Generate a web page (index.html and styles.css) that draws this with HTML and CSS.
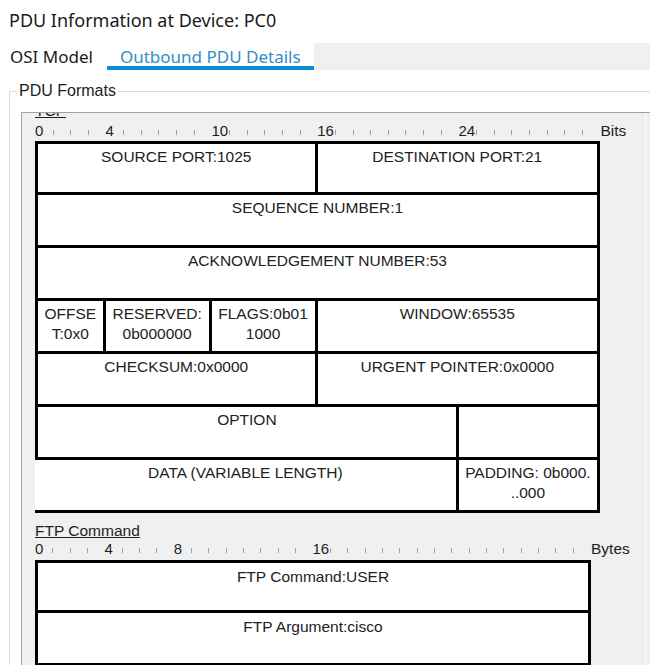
FILE: index.html
```html
<!DOCTYPE html>
<html>
<head>
<meta charset="utf-8">
<title>PDU Information</title>
<link rel="stylesheet" href="styles.css">
</head>
<body>
<div class="title">PDU Information at Device: PC0</div>
<div class="tabs">
  <div class="tab">OSI Model</div>
  <div class="tab tab-active">Outbound PDU Details</div>
  <div class="tab-fill"></div>
</div>
<fieldset class="formats">
  <legend>PDU Formats</legend>
  <div class="pane">
    <div class="viewport">
      <div class="scroll">
        <div class="sec-label">TCP</div>
        <div class="ruler bits">
          <span class="u">0</span><span class="u"><i class="tk"></i></span><span class="u"><i class="tk"></i></span><span class="u"><i class="tk"></i></span><span class="u">4</span><span class="u"><i class="tk"></i></span><span class="u"><i class="tk"></i></span><span class="u"><i class="tk"></i></span><span class="u"><i class="tk"></i></span><span class="u"><i class="tk"></i></span><span class="u">10</span><span class="u"><i class="tk"></i></span><span class="u"><i class="tk"></i></span><span class="u"><i class="tk"></i></span><span class="u"><i class="tk"></i></span><span class="u"><i class="tk"></i></span><span class="u">16</span><span class="u"><i class="tk"></i></span><span class="u"><i class="tk"></i></span><span class="u"><i class="tk"></i></span><span class="u"><i class="tk"></i></span><span class="u"><i class="tk"></i></span><span class="u"><i class="tk"></i></span><span class="u"><i class="tk"></i></span><span class="u">24</span><span class="u"><i class="tk"></i></span><span class="u"><i class="tk"></i></span><span class="u"><i class="tk"></i></span><span class="u"><i class="tk"></i></span><span class="u"><i class="tk"></i></span><span class="u"><i class="tk"></i></span><span class="u"><i class="tk"></i></span><span class="unit-name">Bits</span>
        </div>
        <div class="pdu pdu-tcp">
          <div class="cell edge top s16">SOURCE PORT:1025</div>
          <div class="cell top s16">DESTINATION PORT:21</div>
          <div class="cell edge s32">SEQUENCE NUMBER:1</div>
          <div class="cell edge s32">ACKNOWLEDGEMENT NUMBER:53</div>
          <div class="cell edge s4">OFFSE<br>T:0x0</div>
          <div class="cell s6">RESERVED:<br>0b000000</div>
          <div class="cell s6">FLAGS:0b01<br>1000</div>
          <div class="cell s16">WINDOW:65535</div>
          <div class="cell edge s16">CHECKSUM:0x0000</div>
          <div class="cell s16">URGENT POINTER:0x0000</div>
          <div class="cell edge s24">OPTION</div>
          <div class="cell s8"></div>
          <div class="cell s24">DATA (VARIABLE LENGTH)</div>
          <div class="cell s8">PADDING: 0b000.<br>..000</div>
        </div>

        <div class="sec-label sec-label-ftp">FTP Command</div>
        <div class="ruler bytes">
          <span class="u">0</span><span class="u"><i class="tk"></i></span><span class="u"><i class="tk"></i></span><span class="u"><i class="tk"></i></span><span class="u">4</span><span class="u"><i class="tk"></i></span><span class="u"><i class="tk"></i></span><span class="u"><i class="tk"></i></span><span class="u">8</span><span class="u"><i class="tk"></i></span><span class="u"><i class="tk"></i></span><span class="u"><i class="tk"></i></span><span class="u"><i class="tk"></i></span><span class="u"><i class="tk"></i></span><span class="u"><i class="tk"></i></span><span class="u"><i class="tk"></i></span><span class="u">16</span><span class="u"><i class="tk"></i></span><span class="u"><i class="tk"></i></span><span class="u"><i class="tk"></i></span><span class="u"><i class="tk"></i></span><span class="u"><i class="tk"></i></span><span class="u"><i class="tk"></i></span><span class="u"><i class="tk"></i></span><span class="u"><i class="tk"></i></span><span class="u"><i class="tk"></i></span><span class="u"><i class="tk"></i></span><span class="u"><i class="tk"></i></span><span class="u"><i class="tk"></i></span><span class="u"><i class="tk"></i></span><span class="u"><i class="tk"></i></span><span class="u"><i class="tk"></i></span><span class="unit-name">Bytes</span>
        </div>
        <div class="pdu pdu-ftp">
          <div class="cell edge top s32">FTP Command:USER</div>
          <div class="cell edge s32">FTP Argument:cisco</div>
        </div>
      </div>
    </div>
    <div class="vbar"></div>
  </div>
</fieldset>
</body>
</html>
```

FILE: styles.css
```css
* { box-sizing: border-box; }
html, body { margin: 0; padding: 0; background: #fff; overflow: hidden; }
body {
  width: 650px;
  height: 665px;
  font-family: "Liberation Sans", Arial, sans-serif;
  color: #1e1e1e;
}

.title {
  height: 43px;
  padding: 7px 0 0 9px;
  font-family: "Noto Sans", sans-serif;
  font-size: 18px;
  line-height: 26px;
  color: #1a1a1a;
  white-space: nowrap;
}

.tabs {
  display: flex;
  height: 27px;
  font-family: "Noto Sans", sans-serif;
  font-size: 17px;
  line-height: 27px;
}
.tab {
  padding: 0 14px 0 10px;
  color: #1a1a1a;
  white-space: nowrap;
}
.tab-active {
  padding: 0 13px;
  color: #348dc3;
  box-shadow: inset 0 -4px 0 #0b8fd4;
}
.tab-fill { flex: 1; background: #f0f0f0; }

.formats {
  margin: 12px -20px 0 9px;
  padding: 12px 0 0 0;
  min-width: 0;
  border: 1px solid #d9d9d9;
  border-right: none;
  border-bottom: none;
}
.formats legend {
  margin-left: 7px;
  padding: 0 2px;
  font-size: 16px;
  line-height: 18px;
  color: #1e1e1e;
}

.pane {
  display: flex;
  margin-left: 11px;
  height: 600px;
  border-top: 1px solid #a0a0a0;
  border-left: 1px solid #a0a0a0;
  background: #f0f0f0;
}
.viewport { flex: 0 0 623px; overflow: hidden; }
.vbar { flex: 1; border-left: 1px solid #fbfbfb; }

.scroll { margin-top: -11px; padding-left: 13px; }

.sec-label {
  height: 18px;
  font-size: 15.5px;
  line-height: 18px;
  text-decoration: underline;
  color: #1e1e1e;
}
.sec-label-ftp { margin-top: 9px; }

.ruler {
  display: flex;
  height: 21px;
  font-size: 15px;
  line-height: 21px;
  white-space: nowrap;
  color: #1e1e1e;
}
.ruler .u { flex: 0 0 var(--u); }
.tk {
  display: inline-block;
  width: 1px;
  height: 5px;
  background: #8ca5bc;
  vertical-align: 1px;
}
.unit-name { margin-left: 1px; font-size: 15.5px; }
.bits { --u: 17.656px; }
.bytes { --u: 17.35px; margin-top: -2px; }

.pdu {
  display: grid;
  grid-template-columns: repeat(32, minmax(0, 1fr));
  grid-auto-rows: 53px;
}
.pdu-tcp { width: 565px; grid-template-rows: 54px; }
.pdu-ftp { width: 556px; margin-top: 1px; }

.cell {
  background: #fff;
  border-right: 3px solid #000;
  border-bottom: 3px solid #000;
  text-align: center;
  font-size: 15.5px;
  line-height: 20px;
  padding-top: 3px;
  white-space: nowrap;
  overflow: hidden;
  color: #222;
}
.pdu-ftp .cell { padding-top: 4px; }
.edge { border-left: 3px solid #000; }
.top { border-top: 3px solid #000; }

.s4 { grid-column: span 4; }
.s6 { grid-column: span 6; }
.s8 { grid-column: span 8; }
.s16 { grid-column: span 16; }
.s24 { grid-column: span 24; }
.s32 { grid-column: span 32; }
```
